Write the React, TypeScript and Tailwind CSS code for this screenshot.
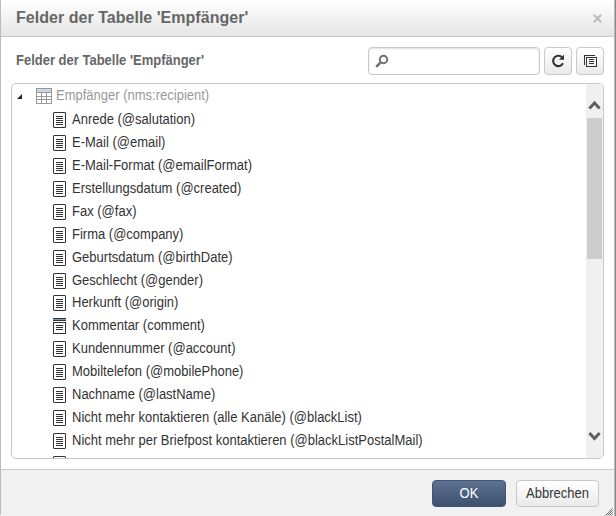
const fields = [
  'Anrede (@salutation)',
  'E-Mail (@email)',
  'E-Mail-Format (@emailFormat)',
  'Erstellungsdatum (@created)',
  'Fax (@fax)',
  'Firma (@company)',
  'Geburtsdatum (@birthDate)',
  'Geschlecht (@gender)',
  'Herkunft (@origin)',
  'Kommentar (comment)',
  'Kundennummer (@account)',
  'Mobiltelefon (@mobilePhone)',
  'Nachname (@lastName)',
  'Nicht mehr kontaktieren (alle Kanäle) (@blackList)',
  'Nicht mehr per Briefpost kontaktieren (@blackListPostalMail)',
  '',
];

function FieldIcon() {
  return (
    <svg width="13" height="16" viewBox="0 0 13 16" className="shrink-0" fill="none" stroke="#333">
      <rect x="0.5" y="0.5" width="12" height="15" rx="0.5" />
      <path d="M3 4.5h7M3 6.5h7M3 8.5h7M3 10.5h7M3 12.5h7" />
    </svg>
  );
}

function MemoIcon() {
  return (
    <svg width="13" height="16" viewBox="0 0 13 16" className="shrink-0" fill="none" stroke="#333" shapeRendering="crispEdges">
      <rect x="0" y="0" width="13" height="3" fill="#33373d" stroke="none" />
      <rect x="0" y="1" width="13" height="1" fill="#8497b0" stroke="none" />
      <path d="M0.5 4.5h12v11h-12zM3 7.5h7M3 9.5h7M3 11.5h7" />
    </svg>
  );
}

function TableIcon() {
  return (
    <svg width="16" height="16" viewBox="0 0 16 16" className="shrink-0">
      <rect x="0.5" y="0.5" width="15" height="15" fill="#fff" stroke="#999" />
      <rect x="1" y="1" width="14" height="3" fill="#ccd5e6" />
      <path d="M1 4.5h14M1 8.5h14M1 11.5h14M5.5 4v11M10.5 4v11" stroke="#999" fill="none" />
    </svg>
  );
}

function Header() {
  return (
    <header className="flex h-[37px] shrink-0 items-center justify-between border-b border-[#c8c8c8] bg-linear-to-b from-white to-[#e5e5e5] pr-[12px] pl-[15px]">
      <h1 className="text-[16px] leading-[18px] font-bold tracking-[0.03px] whitespace-nowrap text-[#666]">
        Felder der Tabelle 'Empfänger'
      </h1>
      <svg width="9" height="9" viewBox="0 0 9 9" stroke="#bbb" strokeWidth="2" fill="none">
        <path d="M0.8 0.8l7.4 7.4M8.2 0.8l-7.4 7.4" />
      </svg>
    </header>
  );
}

function Toolbar() {
  const button =
    'flex h-7 w-7 items-center justify-center rounded-[4px] border border-[#c8c8c8] bg-linear-to-b from-white to-[#eaeaea]';
  return (
    <div className="flex h-[46px] shrink-0 items-start pt-[10px] pr-[10px] pl-[15px]">
      <h2 className="mt-[6px] flex-1 scale-y-[1.08] text-[13px] leading-4 font-bold whitespace-nowrap text-[#666]">
        Felder der Tabelle 'Empfänger'
      </h2>
      <div className="mr-1 flex h-7 w-[172px] items-center rounded-[4px] border border-[#c8c8c8] bg-white pl-[6px] shadow-[inset_0_1px_2px_#ddd]">
        <svg width="14" height="14" viewBox="0 0 14 14" fill="none" stroke="#707070">
          <circle cx="8.5" cy="5.5" r="3.7" strokeWidth="2" />
          <path d="M5.7 8.3L1.2 12.8" strokeWidth="2.6" />
        </svg>
      </div>
      <button className={`${button} mr-1`}>
        <svg width="14" height="14" viewBox="0 0 14 14" fill="none">
          <path d="M11.6 3.9A5.2 5.2 0 1 0 12 9.3" stroke="#333" strokeWidth="2.1" />
          <path d="M13 0.8v4.9H8z" fill="#333" />
        </svg>
      </button>
      <button className={button}>
        <svg width="13" height="12" viewBox="0 0 13 12" fill="none" stroke="#333" shapeRendering="crispEdges">
          <path d="M0.5 10V0.5H11M2.5 2.5h10v9h-10zM5 4.5h5M5 6.5h5M5 8.5h5" />
        </svg>
      </button>
    </div>
  );
}

function ScrollBar() {
  return (
    <div className="flex w-[17px] shrink-0 flex-col bg-[#f0f0f0]">
      <svg width="17" height="34" viewBox="0 0 17 34" fill="none" stroke="#606060" strokeWidth="3">
        <path d="M3.4 24.5l5.1-5.5 5.1 5.5" />
      </svg>
      <div className="ml-px h-[141px] w-[15px] bg-[#cdcdcd]" />
      <div className="flex-1" />
      <svg width="17" height="34" viewBox="0 0 17 34" fill="none" stroke="#606060" strokeWidth="3">
        <path d="M3.4 9l5.1 5.5 5.1-5.5" />
      </svg>
    </div>
  );
}

export default function App() {
  return (
    <div className="flex h-[516px] w-[616px] bg-[#f1f1f1] font-['Liberation_Sans',Arial,sans-serif]">
      <div className="flex min-w-0 flex-1 flex-col rounded-bl-[3px] border-l border-[#bbb] bg-white">
        <Header />
        <Toolbar />
        <div className="mr-[10px] ml-[10px] flex h-[376px] shrink-0 overflow-hidden rounded-[5px] border border-[#c8c8c8]">
          <div className="min-w-0 flex-1 overflow-hidden">
            <div className="flex h-[24.5px] items-center pl-[5px] text-[13px] text-[#999]">
              <svg width="5" height="5" viewBox="0 0 5 5" className="mr-[14px]">
                <path d="M5 0v5H0z" fill="#222" />
              </svg>
              <TableIcon />
              <span className="mb-[0.5px] ml-1 scale-y-[1.07] whitespace-nowrap">Empfänger (nms:recipient)</span>
            </div>
            {fields.map((field, index) => (
              <div key={index} className="flex h-[22.95px] items-center pl-[41px] text-[13px] whitespace-nowrap text-[#333]">
                {field.startsWith('Kommentar') ? <MemoIcon /> : <FieldIcon />}
                <span className="mb-[0.5px] ml-[6px] scale-y-[1.07]">{field}</span>
              </div>
            ))}
          </div>
          <ScrollBar />
        </div>
        <footer className="mt-[10px] flex flex-1 items-start justify-end border-t border-[#c8c8c8] bg-[#f1f1f1] pt-[10px]">
          <button className="mr-[10px] h-[27px] w-[74px] rounded-[4px] border border-[#405577] bg-linear-to-b from-[#5e7291] to-[#3d5070] text-[13px] leading-[25px] text-white">
            <span className="inline-block scale-y-[1.08]">OK</span>
          </button>
          <button className="mr-[2px] h-[27px] w-[83px] rounded-[4px] border border-[#c8c8c8] bg-linear-to-b from-white to-[#eaeaea] text-[13px] leading-[25px] text-[#333]">
            <span className="inline-block scale-y-[1.08]">Abbrechen</span>
          </button>
          <svg width="8" height="8" viewBox="0 0 8 8" className="-mr-px ml-[4px] self-end" stroke="#444" fill="none">
            <path d="M0.5 7.5l7-7M2.5 7.5l5-5M4.5 7.5l3-3M6.5 7.5l1-1" strokeWidth="0.8" />
          </svg>
          <span className="w-[2px]" />
        </footer>
      </div>
      <div className="w-[2px] shrink-0 border-r border-[#888] bg-[#bbb]" />
    </div>
  );
}
